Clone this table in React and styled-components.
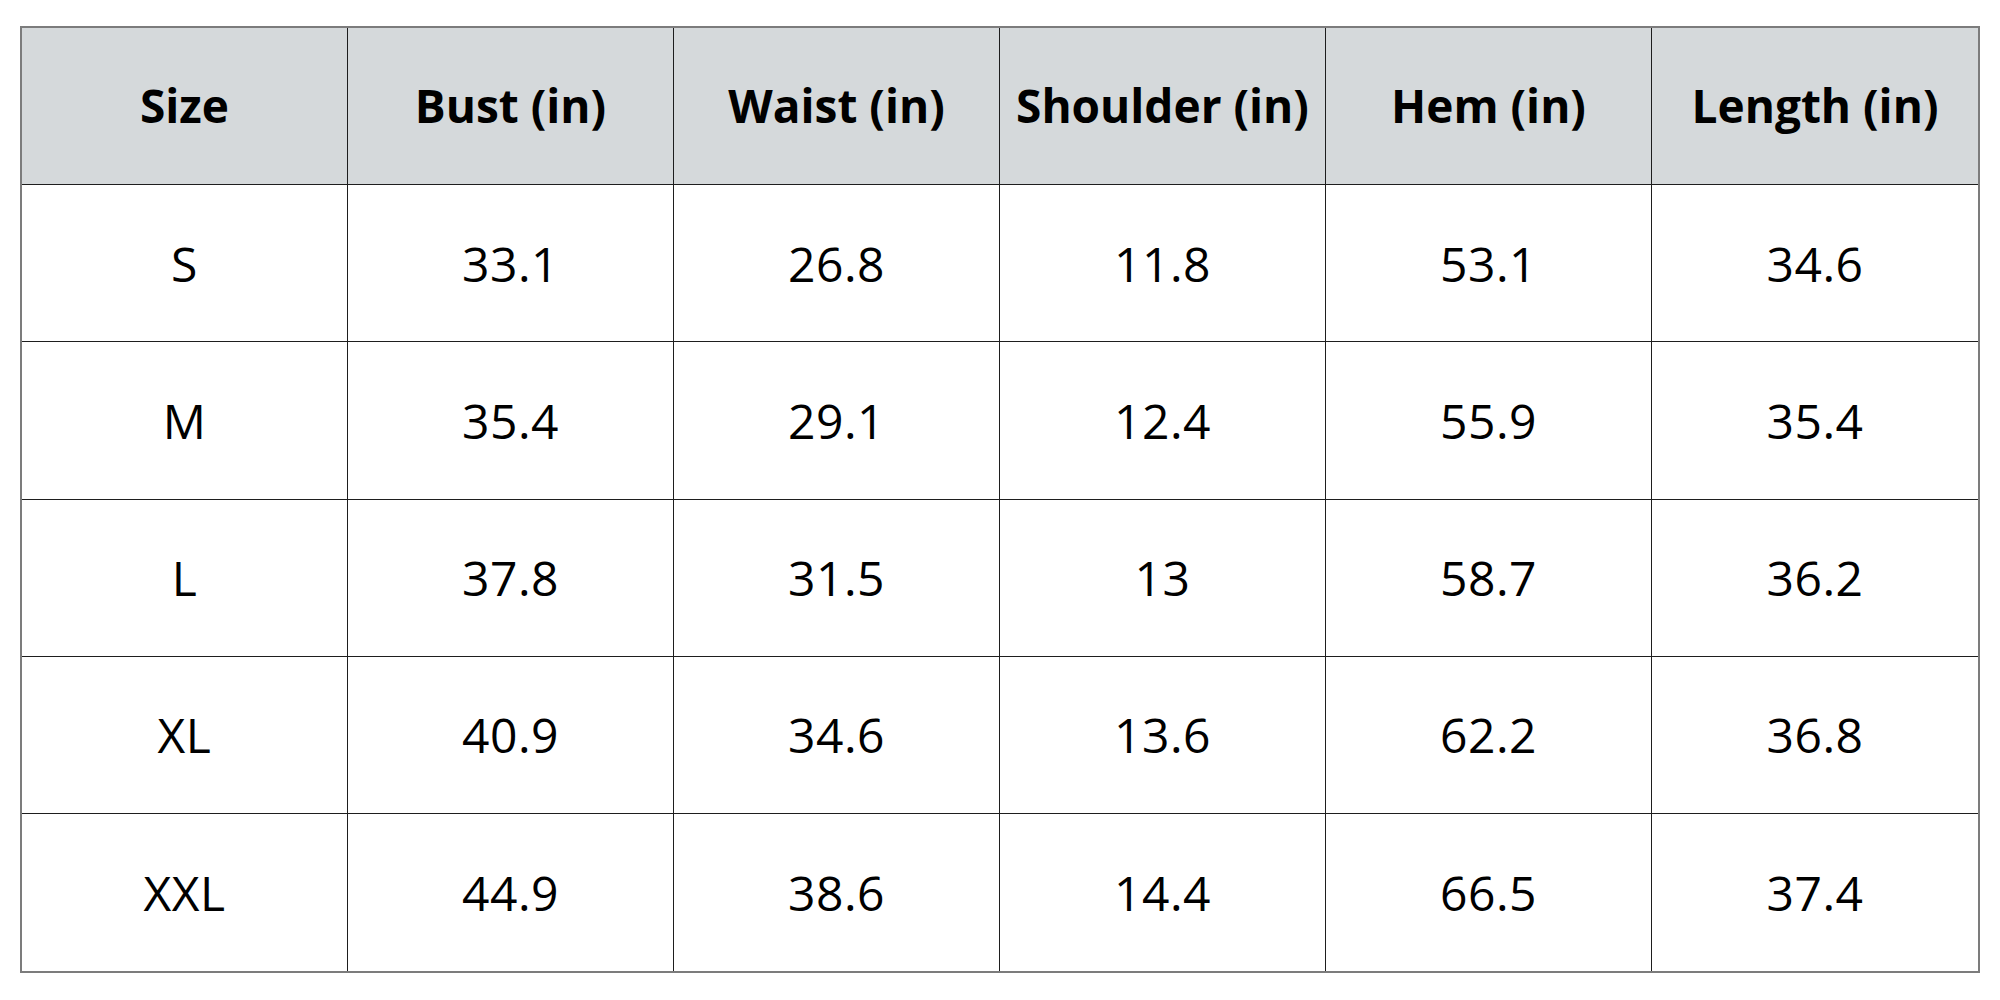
import styled, { createGlobalStyle } from "styled-components";

const GlobalStyle = createGlobalStyle`
  html, body {
    margin: 0;
    padding: 0;
    background: #ffffff;
  }
`;

const columns = ["Size", "Bust (in)", "Waist (in)", "Shoulder (in)", "Hem (in)", "Length (in)"];

const rows = [
  ["S", "33.1", "26.8", "11.8", "53.1", "34.6"],
  ["M", "35.4", "29.1", "12.4", "55.9", "35.4"],
  ["L", "37.8", "31.5", "13", "58.7", "36.2"],
  ["XL", "40.9", "34.6", "13.6", "62.2", "36.8"],
  ["XXL", "44.9", "38.6", "14.4", "66.5", "37.4"],
];

const Page = styled.div`
  padding: 26px 20px 0 20px;
`;

const Chart = styled.div`
  box-sizing: border-box;
  width: 1960px;
  height: 947px;
  border: 2px solid #7c7c7c;
  display: grid;
  grid-template-columns: repeat(6, 1fr);
  grid-template-rows: repeat(6, 1fr);
  font-family: "Open Sans", "Noto Sans", sans-serif;
  color: #000;
`;

const Cell = styled.div`
  display: flex;
  align-items: center;
  justify-content: center;
  border-right: ${(p) => (p.$lastCol ? "none" : "1px solid #1e1e1e")};
  border-bottom: ${(p) => (p.$lastRow ? "none" : "1px solid #1e1e1e")};
  background: ${(p) => (p.$head ? "#d5d9db" : "#ffffff")};
  font-size: ${(p) => (p.$head ? "46px" : "48px")};
  font-weight: ${(p) => (p.$head ? 700 : 400)};
  letter-spacing: ${(p) => (p.$head ? "0" : "0.5px")};
  padding-bottom: ${(p) => (p.$head ? "2px" : "0")};
  white-space: nowrap;
`;

export default function App() {
  return (
    <>
      <GlobalStyle />
      <Page>
        <Chart>
          {columns.map((c, i) => (
            <Cell key={c} $head $lastCol={i === columns.length - 1}>
              {c}
            </Cell>
          ))}
          {rows.map((r, ri) =>
            r.map((v, ci) => (
              <Cell
                key={ri + "-" + ci}
                $lastCol={ci === r.length - 1}
                $lastRow={ri === rows.length - 1}
              >
                {v}
              </Cell>
            ))
          )}
        </Chart>
      </Page>
    </>
  );
}
